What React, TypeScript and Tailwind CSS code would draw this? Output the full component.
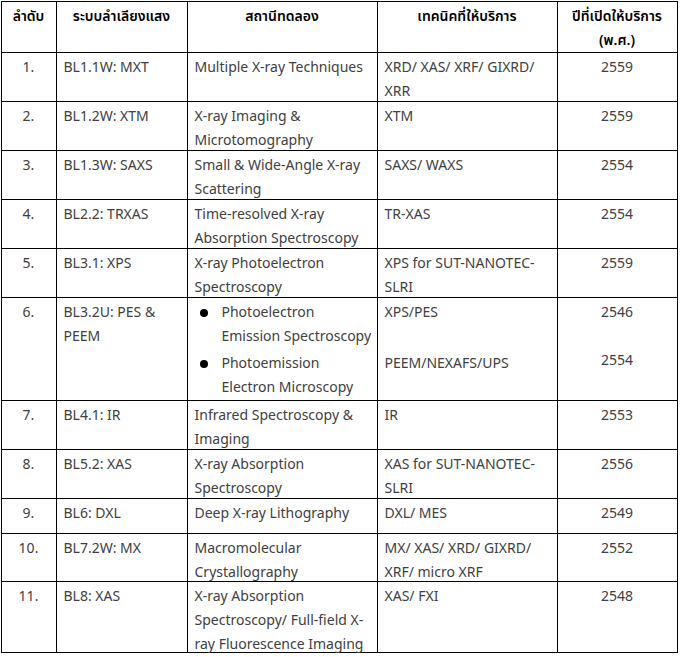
type Row = {
  no: string;
  beamline: string[];
  station: string[];
  tech: string[];
  year: string;
  h: string;
};

const ROWS: Row[] = [
  { no: "1.", beamline: ["BL1.1W: MXT"], station: ["Multiple X-ray Techniques"], tech: ["XRD/ XAS/ XRF/ GIXRD/", "XRR"], year: "2559", h: "h-[49px]" },
  { no: "2.", beamline: ["BL1.2W: XTM"], station: ["X-ray Imaging &", "Microtomography"], tech: ["XTM"], year: "2559", h: "h-[49px]" },
  { no: "3.", beamline: ["BL1.3W: SAXS"], station: ["Small & Wide-Angle X-ray", "Scattering"], tech: ["SAXS/ WAXS"], year: "2554", h: "h-[49px]" },
  { no: "4.", beamline: ["BL2.2: TRXAS"], station: ["Time-resolved X-ray", "Absorption Spectroscopy"], tech: ["TR-XAS"], year: "2554", h: "h-[49px]" },
  { no: "5.", beamline: ["BL3.1: XPS"], station: ["X-ray Photoelectron", "Spectroscopy"], tech: ["XPS for SUT-NANOTEC-", "SLRI"], year: "2559", h: "h-[49px]" },
];

const ROWS_AFTER: Row[] = [
  { no: "7.", beamline: ["BL4.1: IR"], station: ["Infrared Spectroscopy &", "Imaging"], tech: ["IR"], year: "2553", h: "h-[49px]" },
  { no: "8.", beamline: ["BL5.2: XAS"], station: ["X-ray Absorption", "Spectroscopy"], tech: ["XAS for SUT-NANOTEC-", "SLRI"], year: "2556", h: "h-[49px]" },
  { no: "9.", beamline: ["BL6: DXL"], station: ["Deep X-ray Lithography"], tech: ["DXL/ MES"], year: "2549", h: "h-[35px]" },
  { no: "10.", beamline: ["BL7.2W: MX"], station: ["Macromolecular", "Crystallography"], tech: ["MX/ XAS/ XRD/ GIXRD/", "XRF/ micro XRF"], year: "2552", h: "h-[48px]" },
  { no: "11.", beamline: ["BL8: XAS"], station: ["X-ray Absorption", "Spectroscopy/ Full-field X-", "ray Fluorescence Imaging"], tech: ["XAS/ FXI"], year: "2548", h: "h-[71px]" },
];

// text lines run a little past the cell box, as in the Word table
const cell = "border-[1.5px] border-black align-top pt-[3px] pb-0 px-[7px] leading-[24px]";

function Cell({ center, children }: { center?: boolean; children: React.ReactNode }) {
  return (
    <td className={center ? `${cell} text-center` : cell}>
      <div className="mb-[-5px]">{children}</div>
    </td>
  );
}

function Lines({ lines }: { lines: string[] }) {
  return (
    <>
      {lines.map((l) => (
        <div key={l} className="whitespace-nowrap">
          {l}
        </div>
      ))}
    </>
  );
}

function BodyRow({ r }: { r: Row }) {
  return (
    <tr className={r.h}>
      <Cell center>{r.no}</Cell>
      <Cell>
        <Lines lines={r.beamline} />
      </Cell>
      <Cell>
        <Lines lines={r.station} />
      </Cell>
      <Cell>
        <Lines lines={r.tech} />
      </Cell>
      <Cell center>{r.year}</Cell>
    </tr>
  );
}

function Bullet({ lines }: { lines: string[] }) {
  return (
    <div className="flex">
      <span className="w-[27px] shrink-0 pl-[5px] pt-[8px]">
        <span className="block w-[8px] h-[8px] rounded-full bg-black" />
      </span>
      <div>
        <Lines lines={lines} />
      </div>
    </div>
  );
}

const th = `${cell} text-center font-semibold`;

export default function App() {
  return (
    <div
      className="w-[681px] h-[657px] bg-white pt-[0.5px] pl-[0.5px]"
      style={{ fontFamily: '"Noto Sans Thai", "Leelawadee UI", "Noto Sans", "Open Sans", sans-serif' }}
    >
      <table className="table-fixed border-collapse w-[677px] text-[14px] text-[#404040]">
        <colgroup>
          <col className="w-[55px]" />
          <col className="w-[131px]" />
          <col className="w-[190px]" />
          <col className="w-[180px]" />
          <col className="w-[120px]" />
        </colgroup>
        <thead>
          <tr className="h-[51px] text-black">
            <th className={th}>
              <div className="mb-[-5px]">ลำดับ</div>
            </th>
            <th className={th}>
              <div className="mb-[-5px]">ระบบลำเลียงแสง</div>
            </th>
            <th className={th}>
              <div className="mb-[-5px]">สถานีทดลอง</div>
            </th>
            <th className={th}>
              <div className="mb-[-5px]">เทคนิคที่ให้บริการ</div>
            </th>
            <th className={th}>
              <div className="mb-[-5px]">
                <div>ปีที่เปิดให้บริการ</div>
                <div>(พ.ศ.)</div>
              </div>
            </th>
          </tr>
        </thead>
        <tbody>
          {ROWS.map((r) => (
            <BodyRow key={r.no} r={r} />
          ))}
          <tr className="h-[103px]">
            <Cell center>6.</Cell>
            <Cell>
              <Lines lines={["BL3.2U: PES &", "PEEM"]} />
            </Cell>
            <Cell>
              <Bullet lines={["Photoelectron", "Emission Spectroscopy"]} />
              <div className="mt-[3px]">
                <Bullet lines={["Photoemission", "Electron Microscopy"]} />
              </div>
            </Cell>
            <Cell>
              <div>XPS/PES</div>
              <div className="mt-[27px]">PEEM/NEXAFS/UPS</div>
            </Cell>
            <Cell center>
              <div>2546</div>
              <div className="mt-[24px]">2554</div>
            </Cell>
          </tr>
          {ROWS_AFTER.map((r) => (
            <BodyRow key={r.no} r={r} />
          ))}
        </tbody>
      </table>
    </div>
  );
}
